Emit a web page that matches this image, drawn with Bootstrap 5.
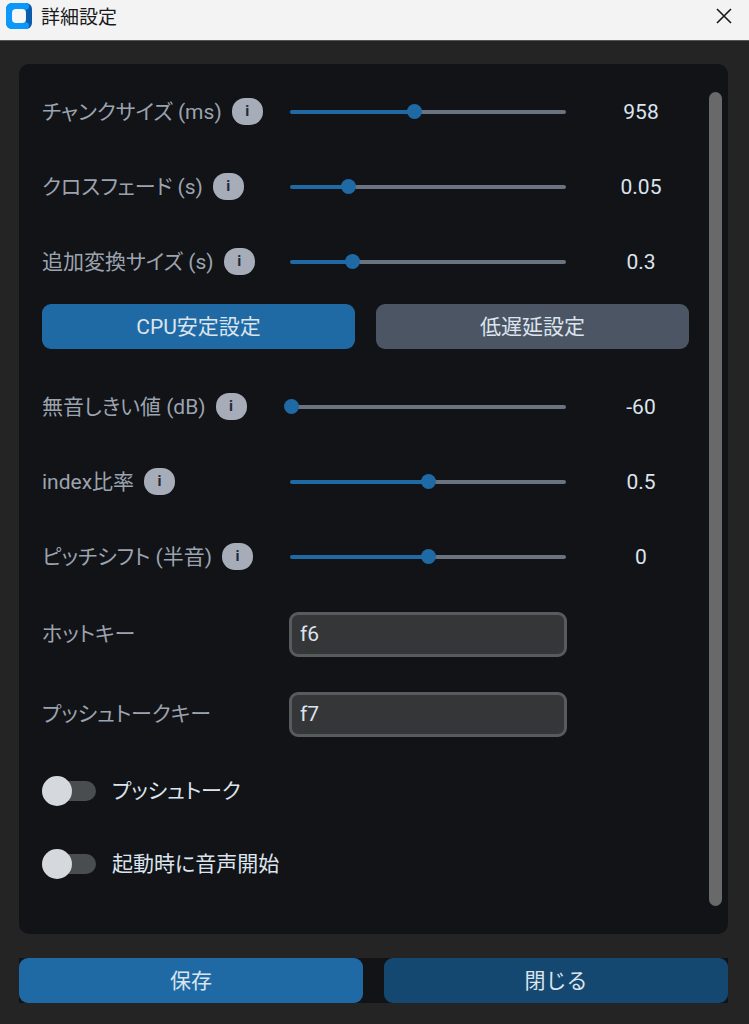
<!DOCTYPE html>
<html lang="ja" data-bs-theme="dark">
<head>
<meta charset="utf-8">
<meta name="viewport" content="width=device-width, initial-scale=1">
<title>詳細設定</title>
<link href="https://cdn.jsdelivr.net/npm/bootstrap@5.3.0/dist/css/bootstrap.min.css" rel="stylesheet">
<style>
  body {
    background: #242424;
    color: #dce4ee;
    font-family: Roboto, "Noto Sans CJK JP", sans-serif;
    font-size: 21px;
    line-height: 28px;
    font-feature-settings: "palt";
  }
  .titlebar { height: 41px; background: #f3f3f3; border-bottom: 1px solid #555; color: #1a1a1a; padding: 0 17px 8px 5px; }
  .titlebar h1 { padding-top: 3px; font-size: 19px; line-height: 28px; font-weight: 400; color: #1a1a1a; font-feature-settings: normal; }
  .close-x { color: #1a1a1a; line-height: 0; }
  .page { padding: 23px 21px 21px 19px; gap: 24px; }
  .panel { background: #111317; border-radius: 10px; padding: 10px 6px 28px 23px; gap: 20px; }
  .scroll-thumb { width: 13px; margin-top: 18px; border-radius: 7px; background: #696969; }
  .setting { display: grid; grid-template-columns: 247fr 278fr 122fr; align-items: center; min-height: 75px; }
  .setting-key { min-height: 80px; }
  .setting-label { color: #9ca3af; }
  .info { width: 31px; height: 27px; margin-left: 10px; border-radius: 13px; background: #a6adb9; color: #1f2937; font-size: 15px; line-height: 27px; font-weight: 700; }
  .rail { height: 4px; margin: 0 1px; border-radius: 2px; background: linear-gradient(to right, #1f6aa5 var(--fill), #6b7280 var(--fill)); }
  .rail .form-range { width: calc(100% + 12px); height: 16px; margin: 0 -6px; }
  .rail .form-range::-webkit-slider-runnable-track { height: 15px; background: transparent; }
  .rail .form-range::-webkit-slider-thumb { width: 15px; height: 15px; margin: 0; background: #1f6aa5; }
  .rail .form-range::-moz-range-track { background: transparent; }
  .rail .form-range::-moz-range-thumb { width: 15px; height: 15px; background: #1f6aa5; }
  .reading { margin-left: 26px; text-align: center; }
  .wide-btn { height: 45px; padding: 0; border: 0; border-radius: 9px; background: #1f6aa5; color: #dce4ee; font-size: 21px; line-height: 44px; }
  .wide-btn:hover { background: #144870; color: #dce4ee; }
  .btn-slate { background: #4b5563; }
  .btn-deep { background: #144870; }
  .presets { gap: 21px; margin: 5px 0 20px; }
  .key-field { height: 45px; padding: 0 8px; border: 3px solid #565b5e; border-radius: 9px; background: #343638; color: #dce4ee; font-size: 21px; }
  .toggle-row { min-height: 73px; gap: 16px; }
  .toggle { appearance: none; display: flex; align-items: center; width: 54px; height: 30px; margin: 0; position: relative; }
  .toggle::before { content: ""; width: 54px; height: 20px; border-radius: 10px; background: #4a4d50; }
  .toggle::after { content: ""; position: absolute; left: 0; width: 30px; height: 30px; border-radius: 50%; background: #d5d9de; }
  .toggle:checked::before { background: #1f6aa5; }
  .toggle:checked::after { left: auto; right: 0; }
  .actions { background: #111317; gap: 21px; }
</style>
</head>
<body class="d-flex flex-column min-vh-100">
  <header class="titlebar d-flex align-items-center">
    <svg width="28" height="28" viewBox="0 0 28 28" aria-hidden="true">
      <rect x="1" y="1" width="26" height="26" rx="6" fill="#0b5cab"/>
      <path d="M7 1h13.500a3.500 3.500 0 0 1 3 5.500L20 9v10l3.500 2.500a3.500 3.500 0 0 1-3 5.500H7a6 6 0 0 1-6-6V7a6 6 0 0 1 6-6z" fill="#0c98fb"/>
      <rect x="7" y="7" width="14" height="14" rx="4" fill="#f6f6f6"/>
    </svg>
    <h1 class="mb-0 ms-2">詳細設定</h1>
    <button type="button" class="close-x btn p-0 border-0 ms-auto" aria-label="閉じる">
      <svg width="16" height="16" viewBox="0 0 16 16" fill="none" stroke="currentColor" stroke-width="1.6"><path d="M1 1l14 14M15 1L1 15"/></svg>
    </button>
  </header>

  <main class="page d-flex flex-column flex-grow-1">
    <section class="panel d-flex flex-grow-1">
      <form class="flex-grow-1">
        <div class="setting">
          <div class="d-flex align-items-center"><label class="setting-label" for="chunk">チャンクサイズ (ms)</label><button type="button" class="info btn p-0 border-0">i</button></div>
          <div class="rail d-flex align-items-center" style="--fill:45%"><input class="form-range" type="range" id="chunk" min="100" max="2000" value="958"></div>
          <output class="reading" for="chunk">958</output>
        </div>
        <div class="setting">
          <div class="d-flex align-items-center"><label class="setting-label" for="fade">クロスフェード (s)</label><button type="button" class="info btn p-0 border-0">i</button></div>
          <div class="rail d-flex align-items-center" style="--fill:21%"><input class="form-range" type="range" id="fade" min="0.01" max="0.2" step="0.01" value="0.05"></div>
          <output class="reading" for="fade">0.05</output>
        </div>
        <div class="setting">
          <div class="d-flex align-items-center"><label class="setting-label" for="extra">追加変換サイズ (s)</label><button type="button" class="info btn p-0 border-0">i</button></div>
          <div class="rail d-flex align-items-center" style="--fill:22%"><input class="form-range" type="range" id="extra" min="0.1" max="1" step="0.1" value="0.3"></div>
          <output class="reading" for="extra">0.3</output>
        </div>
        <div class="presets d-flex">
          <button type="button" class="btn wide-btn w-100">CPU安定設定</button>
          <button type="button" class="btn wide-btn btn-slate w-100">低遅延設定</button>
        </div>
        <div class="setting">
          <div class="d-flex align-items-center"><label class="setting-label" for="silence">無音しきい値 (dB)</label><button type="button" class="info btn p-0 border-0">i</button></div>
          <div class="rail d-flex align-items-center" style="--fill:0%"><input class="form-range" type="range" id="silence" min="-60" max="0" value="-60"></div>
          <output class="reading" for="silence">-60</output>
        </div>
        <div class="setting">
          <div class="d-flex align-items-center"><label class="setting-label" for="ratio">index比率</label><button type="button" class="info btn p-0 border-0">i</button></div>
          <div class="rail d-flex align-items-center" style="--fill:50%"><input class="form-range" type="range" id="ratio" min="0" max="1" step="0.1" value="0.5"></div>
          <output class="reading" for="ratio">0.5</output>
        </div>
        <div class="setting">
          <div class="d-flex align-items-center"><label class="setting-label" for="pitch">ピッチシフト (半音)</label><button type="button" class="info btn p-0 border-0">i</button></div>
          <div class="rail d-flex align-items-center" style="--fill:50%"><input class="form-range" type="range" id="pitch" min="-24" max="24" value="0"></div>
          <output class="reading" for="pitch">0</output>
        </div>
        <div class="setting setting-key">
          <label class="setting-label" for="hotkey">ホットキー</label>
          <input class="form-control key-field" type="text" id="hotkey" value="f6">
        </div>
        <div class="setting setting-key">
          <label class="setting-label" for="pttkey">プッシュトークキー</label>
          <input class="form-control key-field" type="text" id="pttkey" value="f7">
        </div>
        <div class="toggle-row d-flex align-items-center">
          <input class="toggle" type="checkbox" role="switch" id="ptt"><label for="ptt">プッシュトーク</label>
        </div>
        <div class="toggle-row d-flex align-items-center">
          <input class="toggle" type="checkbox" role="switch" id="autostart"><label for="autostart">起動時に音声開始</label>
        </div>
      </form>
      <div class="scroll-thumb flex-shrink-0"></div>
    </section>
    <div class="actions d-flex">
      <button type="button" class="btn wide-btn w-100">保存</button>
      <button type="button" class="btn wide-btn btn-deep w-100">閉じる</button>
    </div>
  </main>
  <script src="https://cdn.jsdelivr.net/npm/bootstrap@5.3.0/dist/js/bootstrap.bundle.min.js"></script>
</body>
</html>
